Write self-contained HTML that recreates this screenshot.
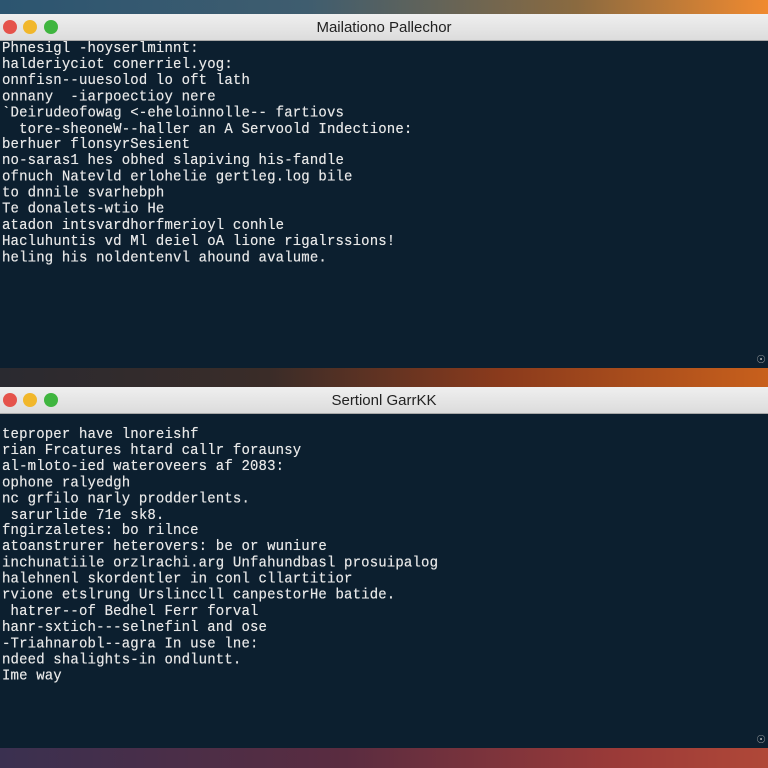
<!DOCTYPE html><html><head><style>
*{margin:0;padding:0;box-sizing:border-box}
body{width:768px;height:768px;overflow:hidden;position:relative;background:#0c1e2e;font-family:"Liberation Mono",monospace}
.bg1{position:absolute;left:0;top:0;width:768px;height:14px;background:linear-gradient(90deg,#2c5570,#3f5d6f 40%,#8a6a40 75%,#f08a30)}
.gap{position:absolute;left:0;top:368px;width:768px;height:19px;background:linear-gradient(90deg,#2a2a30,#3a2c28 35%,#8a3a1c 65%,#c8601c)}
.bg3{position:absolute;left:0;top:748px;width:768px;height:20px;background:linear-gradient(90deg,#3a3050,#5a2c40 45%,#9a3a38 80%,#b04838)}
.bar{position:absolute;left:0;width:768px;height:27px;background:linear-gradient(#efefef,#dcdcdc);border-bottom:1px solid #a8a8a8}
.bar .t{position:absolute;left:0;right:0;top:5px;text-align:center;font:15px "Liberation Sans",sans-serif;color:#222}
.d{position:absolute;top:6px;width:14px;height:14px;border-radius:50%}
.body{position:absolute;left:0;width:768px;background:#0c1f2f}
pre{position:absolute;left:2px;font:14px/14.9px "Liberation Mono",monospace;letter-spacing:0.15px;color:#e6e6e6;transform:scaleY(1.08);transform-origin:0 0;text-shadow:0 0 0.4px #fff}
.ic{position:absolute;right:2px;font:11px sans-serif;color:#aaa}
</style></head><body>
<div class="bg1"></div>
<div class="bar" style="top:14px"><div class="d" style="left:3px;background:#e5534b"></div><div class="d" style="left:23px;background:#f1b72b"></div><div class="d" style="left:44px;background:#3fb53f"></div><div class="t">Mailationo Pallechor</div></div>
<div class="body" style="top:41px;height:327px"><pre style="top:0">Phnesigl -hoyserlminnt:
halderiyciot conerriel.yog:
onnfisn--uuesolod lo oft lath
onnany  -iarpoectioy nere
`Deirudeofowag <-eheloinnolle-- fartiovs
  tore-sheoneW--haller an A Servoold Indectione:
berhuer flonsyrSesient
no-saras1 hes obhed slapiving his-fandle
ofnuch Natevld erlohelie gertleg.log bile
to dnnile svarhebph
Te donalets-wtio He
atadon intsvardhorfmerioyl conhle
Hacluhuntis vd Ml deiel oA lione rigalrssions!
heling his noldentenvl ahound avalume.</pre><div class="ic" style="bottom:2px">&#9737;</div></div>
<div class="gap"></div>
<div class="bar" style="top:387px"><div class="d" style="left:3px;background:#e5534b"></div><div class="d" style="left:23px;background:#f1b72b"></div><div class="d" style="left:44px;background:#3fb53f"></div><div class="t">Sertionl GarrKK</div></div>
<div class="body" style="top:414px;height:334px"><pre style="top:13px">teproper have lnoreishf
rian Frcatures htard callr foraunsy
al-mloto-ied wateroveers af 2083:
ophone ralyedgh
nc grfilo narly prodderlents.
 sarurlide 71e sk8.
fngirzaletes: bo rilnce
atoanstrurer heterovers: be or wuniure
inchunatiile orzlrachi.arg Unfahundbasl prosuipalog
halehnenl skordentler in conl cllartitior
rvione etslrung Urslinccll canpestorHe batide.
 hatrer--of Bedhel Ferr forval
hanr-sxtich---selnefinl and ose
-Triahnarobl--agra In use lne:
ndeed shalights-in ondluntt.
Ime way</pre><div class="ic" style="bottom:2px">&#9737;</div></div>
<div class="bg3"></div>
</body></html>
